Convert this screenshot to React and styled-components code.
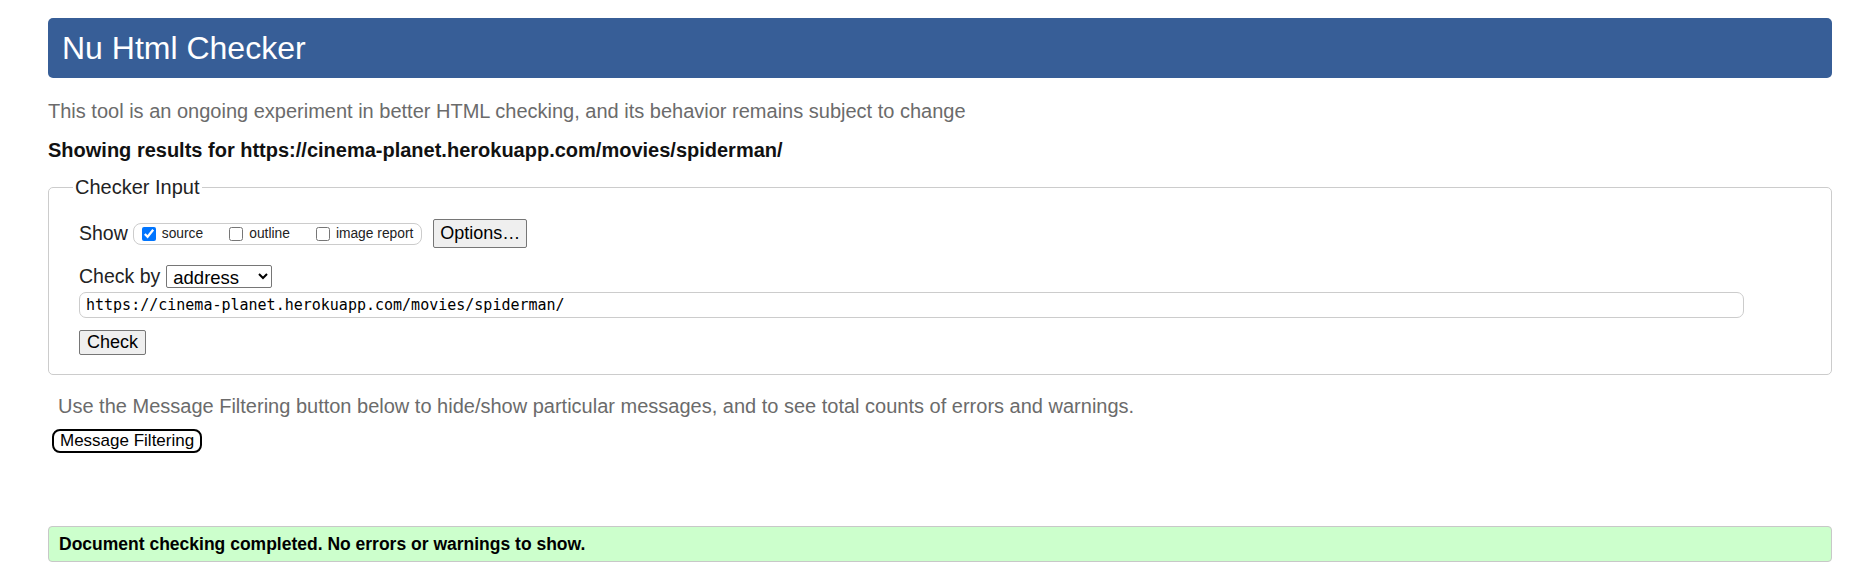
import React from "react";
import styled, { createGlobalStyle } from "styled-components";

const GlobalStyle = createGlobalStyle`
  html, body { margin: 0; padding: 0; background: #fff; }
  body { font-family: "Liberation Sans", Arial, sans-serif; color: #000; }
`;

const Page = styled.div`
  padding: 18px 37px 8px 48px;
  display: flex;
  flex-direction: column;
`;

const Header = styled.h1`
  margin: 0;
  height: 60px;
  background: #375e97;
  border-radius: 5px;
  color: #fff;
  font-weight: normal;
  font-size: 32px;
  display: flex;
  align-items: center;
  padding-left: 14px;
`;

const Intro = styled.p`
  margin: 22px 0 0;
  font-size: 20px;
  line-height: 23px;
  color: #6b6b6b;
`;

const Showing = styled.p`
  margin: 16px 0 0;
  font-size: 20px;
  line-height: 23px;
  font-weight: bold;
  color: #111;
`;

const Fieldset = styled.fieldset`
  margin: 14px 0 0;
  border: 1px solid #cccccc;
  border-radius: 5px;
  padding: 20px 0 19px 30px;
  min-width: 0;
`;

const Legend = styled.legend`
  font-size: 20px;
  line-height: 23px;
  color: #222;
  padding: 0 2px;
  margin-left: -6px;
`;

const Row = styled.div`
  display: flex;
  align-items: center;
  margin-top: ${(p) => p.$mt || 0}px;
`;

const Label = styled.span`
  font-size: 19.5px;
  color: #222;
`;

const ShowBox = styled.span`
  display: inline-flex;
  align-items: center;
  height: 22px;
  box-sizing: border-box;
  border: 1px solid #cccccc;
  border-radius: 8px;
  padding: 0 8px 0 8px;
  margin-left: 5px;
  gap: 26px;
`;

const Check = styled.label`
  display: inline-flex;
  align-items: center;
  gap: 6px;
  font-size: 13.8px;
  color: #222;
`;

const Box = styled.input`
  margin: 0;
  width: 14px;
  height: 14px;
  accent-color: #0075ff;
`;

const Button = styled.button`
  font-family: "Liberation Sans", Arial, sans-serif;
  font-size: ${(p) => p.$fs || 18}px;
  height: ${(p) => p.$h || 25}px;
  padding: 0 ${(p) => p.$px || 6}px;
  background: #efefef;
  color: #000;
  border: 1px solid #767676;
  border-radius: 2px;
  margin-left: ${(p) => p.$ml || 0}px;
`;

const Select = styled.select`
  font-family: "Liberation Sans", Arial, sans-serif;
  font-size: 18.5px;
  height: 23px;
  width: 106px;
  margin-left: 6px;
  border: 1px solid #767676;
  border-radius: 2px;
  background: #fff;
  color: #000;
  padding: 0 2px;
`;

const UrlInput = styled.input`
  display: block;
  box-sizing: border-box;
  height: 26px;
  width: calc(100% - 87px);
  margin: 4px 0 0;
  border: 1px solid #cccccc;
  border-radius: 7px;
  padding: 0 6px;
  font-family: "DejaVu Sans Mono", "Liberation Mono", monospace;
  font-size: 15px;
  color: #000;
  outline: none;
`;

const Note = styled.p`
  margin: 20px 0 0 10px;
  font-size: 20px;
  line-height: 23px;
  color: #6b6b6b;
`;

const FilterButton = styled.button`
  align-self: flex-start;
  margin: 11px 0 0 4px;
  height: 24px;
  padding: 0 6px;
  background: #fff;
  color: #000;
  border: 2px solid #000;
  border-radius: 8px;
  font-family: "Liberation Sans", Arial, sans-serif;
  font-size: 17px;
`;

const Success = styled.div`
  margin-top: 73px;
  height: 36px;
  box-sizing: border-box;
  background: #ccffcc;
  border: 1px solid #c8c8c8;
  border-radius: 4px;
  padding-left: 10px;
  display: flex;
  align-items: center;
  font-weight: bold;
  font-size: 17.5px;
  color: #000;
`;

export default function App() {
  return (
    <>
      <GlobalStyle />
      <Page>
        <Header>Nu Html Checker</Header>
        <Intro>
          This tool is an ongoing experiment in better HTML checking, and its behavior remains subject to change
        </Intro>
        <Showing>Showing results for https://cinema-planet.herokuapp.com/movies/spiderman/</Showing>
        <Fieldset>
          <Legend>Checker Input</Legend>
          <Row>
            <Label>Show</Label>
            <ShowBox>
              <Check>
                <Box type="checkbox" defaultChecked />
                source
              </Check>
              <Check>
                <Box type="checkbox" />
                outline
              </Check>
              <Check>
                <Box type="checkbox" />
                image report
              </Check>
            </ShowBox>
            <Button $fs={18} $h={29} $px={6} $ml={11}>
              Options…
            </Button>
          </Row>
          <Row $mt={17}>
            <Label>Check by</Label>
            <Select defaultValue="address">
              <option value="address">address</option>
              <option value="file">file upload</option>
              <option value="text">text input</option>
            </Select>
          </Row>
          <UrlInput
            type="url"
            defaultValue="https://cinema-planet.herokuapp.com/movies/spiderman/"
          />
          <Row $mt={12}>
            <Button $fs={18} $h={25} $px={7}>
              Check
            </Button>
          </Row>
        </Fieldset>
        <Note>
          Use the Message Filtering button below to hide/show particular messages, and to see total counts of errors and warnings.
        </Note>
        <FilterButton>Message Filtering</FilterButton>
        <Success>Document checking completed. No errors or warnings to show.</Success>
      </Page>
    </>
  );
}
